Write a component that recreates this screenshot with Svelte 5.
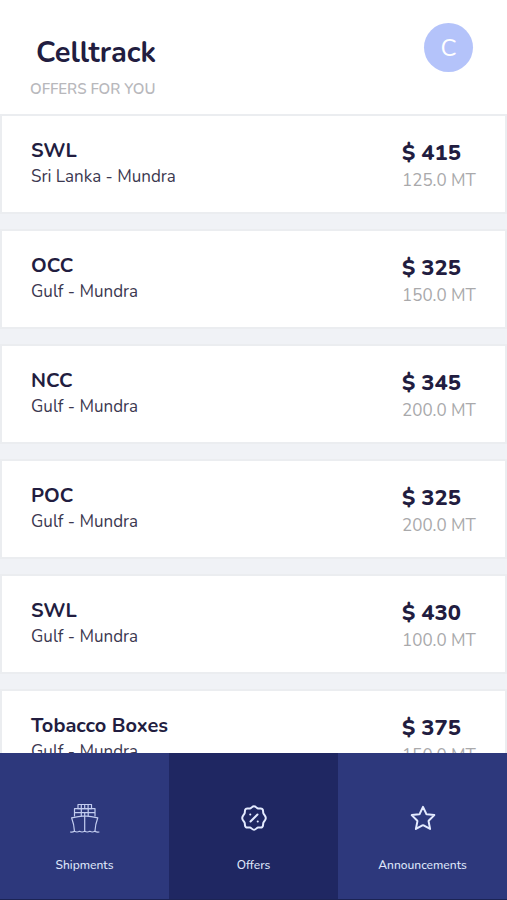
<script lang="ts">
  type Offer = {
    grade: string;
    route: string;
    price: number;
    weight: string;
  };

  const offers: Offer[] = [
    { grade: "SWL", route: "Sri Lanka - Mundra", price: 415, weight: "125.0" },
    { grade: "OCC", route: "Gulf - Mundra", price: 325, weight: "150.0" },
    { grade: "NCC", route: "Gulf - Mundra", price: 345, weight: "200.0" },
    { grade: "POC", route: "Gulf - Mundra", price: 325, weight: "200.0" },
    { grade: "SWL", route: "Gulf - Mundra", price: 430, weight: "100.0" },
    { grade: "Tobacco Boxes", route: "Gulf - Mundra", price: 375, weight: "150.0" },
  ];

  const tabs = ["Shipments", "Offers", "Announcements"];

  let active = $state("Offers");
</script>

<div class="app">
  <header>
    <div>
      <h1>Celltrack</h1>
      <h2>OFFERS FOR YOU</h2>
    </div>
    <button class="avatar" aria-label="Account">C</button>
  </header>

  <main>
    <ul>
      {#each offers as offer}
        <li class="card">
          <div>
            <h3>{offer.grade}</h3>
            <p class="route">{offer.route}</p>
          </div>
          <div class="amount">
            <p class="price">$ {offer.price}</p>
            <p class="weight">{offer.weight} MT</p>
          </div>
        </li>
      {/each}
    </ul>
  </main>

  <nav>
    {#each tabs as tab}
      <a
        href={`#${tab.toLowerCase()}`}
        class:active={active === tab}
        aria-current={active === tab ? "page" : undefined}
        onclick={() => (active = tab)}
      >
        {#if tab === "Shipments"}
          <svg class="ship" viewBox="0 0 30 30" aria-hidden="true">
            <path d="M8 1.500h13.500v4.200H8zM11.300 1.500v4.200M14.700 1.500v4.200M18.100 1.500v4.200" />
            <path d="M4.500 13V5.700h20.500V13M4.500 9.700h20.500M11.300 5.700v7M18.200 5.700v7" />
            <path d="M4.500 28.500C4.200 23 3 18.500 1.600 14.800C6 13.700 10.500 13 14.700 12.800C19 13 23.500 13.700 27.800 14.800C26.400 18.500 25.200 23 24.900 28.500M14.700 9.700v18.800" />
            <path d="M.5 29q2 .4 4-.7q2.500 1.400 5 0q2.500 1.400 5.200 0q2.600 1.400 5.100 0q2.500 1.400 5 0q2 1.100 4.200.7" />
          </svg>
        {:else if tab === "Offers"}
          <svg viewBox="0 0 26 26" aria-hidden="true">
            <path d="M13 1.200C14.800 1.200 15.400 3.100 17 3.500C18.600 3.900 20.100 2.800 21.300 4C22.600 5.200 21.800 6.800 22.400 8.300C23 9.800 24.800 10.800 24.800 13C24.800 15.200 23 16.200 22.400 17.700C21.800 19.200 22.600 20.800 21.300 22C20.100 23.200 18.600 22.100 17 22.500C15.400 22.900 14.800 24.800 13 24.800C11.200 24.800 10.600 22.900 9 22.500C7.400 22.100 5.900 23.200 4.700 22C3.400 20.800 4.200 19.200 3.600 17.700C3 16.200 1.200 15.200 1.200 13C1.200 10.800 3 9.800 3.600 8.300C4.200 6.800 3.400 5.200 4.700 4C5.900 2.800 7.400 3.900 9 3.500C10.600 3.100 11.200 1.200 13 1.200z" />
            <path d="M9.500 16.500L16.500 9.500M9.200 9.500h.1M16.700 16.500h.1" />
          </svg>
        {:else}
          <svg viewBox="0 0 26 26" aria-hidden="true">
            <path d="M13 1.800L16.200 8.700Q16.400 9.100 16.900 9.200L24.300 10.100L18.900 15.500Q18.500 15.900 18.600 16.400L20.100 23.900L13.600 20.300Q13 20 12.400 20.300L5.900 23.900L7.400 16.400Q7.500 15.900 7.100 15.500L1.700 10.100L9.100 9.200Q9.600 9.100 9.800 8.700z" />
          </svg>
        {/if}
        <span>{tab}</span>
      </a>
    {/each}
  </nav>
</div>

<style>
  :global(body) {
    margin: 0;
    background: #f0f2f6;
  }

  .app {
    display: flex;
    flex-direction: column;
    height: 100vh;
    font-family: "Nunito", "Lato", sans-serif;
    color: #221d40;
  }

  header {
    display: flex;
    justify-content: space-between;
    align-items: flex-start;
    padding: 23px 34px 15px 30px;
    background: #fff;
  }

  h1,
  h2,
  h3,
  p,
  ul {
    margin: 0;
    padding: 0;
  }

  h1 {
    padding: 10px 0 0 6px;
    font-size: 29px;
    font-weight: 700;
    line-height: 40px;
  }

  h2 {
    margin-top: 6px;
    font-size: 15px;
    font-weight: 600;
    line-height: 20px;
    color: #b8b8bc;
  }

  .avatar {
    width: 49px;
    height: 49px;
    padding: 0;
    border: 0;
    border-radius: 50%;
    background: #b4c3fa;
    color: #fff;
    font-family: inherit;
    font-size: 24px;
  }

  main {
    flex: 1;
    min-height: 0;
    overflow-y: auto;
    scrollbar-width: none;
  }

  ul {
    display: flex;
    flex-direction: column;
    gap: 15px;
    list-style: none;
  }

  .card {
    display: flex;
    justify-content: space-between;
    padding: 22px 28px 18px 29px;
    border: 2px solid #ebedf0;
    background: #fff;
  }

  h3 {
    font-size: 20px;
    font-weight: 700;
    line-height: 26px;
  }

  .route {
    font-size: 17px;
    line-height: 26px;
    color: #3b3850;
  }

  .amount {
    width: 75px;
    white-space: nowrap;
  }

  .price {
    font-size: 22px;
    font-weight: 800;
    line-height: 30px;
  }

  .weight {
    font-size: 17px;
    line-height: 26px;
    color: #a9a9ab;
  }

  nav {
    display: flex;
    border-bottom: 1px solid #1c2454;
    background: #2d387c;
  }

  nav a {
    display: flex;
    flex: 1 1 0;
    flex-direction: column;
    align-items: center;
    gap: 22px;
    padding: 50px 0 24px;
    color: #dfe6fa;
    font-size: 12px;
    font-weight: 500;
    line-height: 20px;
    text-decoration: none;
  }

  nav a.active {
    background: #1f2762;
  }

  svg {
    width: 26px;
    height: 26px;
    margin: 2px 0;
    fill: none;
    stroke: #e4ebff;
    stroke-width: 2;
    stroke-linecap: round;
    stroke-linejoin: round;
  }

  .ship {
    width: 30px;
    height: 30px;
    margin: 0;
    stroke: #c3cdf0;
    stroke-width: 1.2;
  }
</style>
